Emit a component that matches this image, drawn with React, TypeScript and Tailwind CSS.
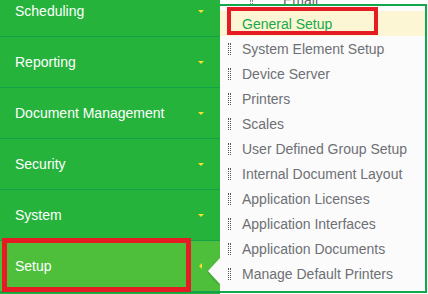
const menu = [
  { label: 'Scheduling' },
  { label: 'Reporting' },
  { label: 'Document Management' },
  { label: 'Security' },
  { label: 'System' },
];

const setupItems = [
  'General Setup',
  'System Element Setup',
  'Device Server',
  'Printers',
  'Scales',
  'User Defined Group Setup',
  'Internal Document Layout',
  'Application Licenses',
  'Application Interfaces',
  'Application Documents',
  'Manage Default Printers',
];

function Handle() {
  return <span className="block w-[3px] h-[12px] border-x border-dotted border-[#555] shrink-0" />;
}

export default function App() {
  return (
    <div
      className="relative w-[428px] h-[294px] overflow-hidden bg-white flex"
      style={{ fontFamily: '"Liberation Sans", Arial, sans-serif' }}
    >
      {/* sidebar */}
      <div className="w-[220px] shrink-0 bg-[#25b33b] flex flex-col -mt-[14px]">
        {menu.map((m) => (
          <div
            key={m.label}
            className="h-[51px] shrink-0 flex items-center justify-between pl-[15px] pr-[16px] border-b border-[#12a24a] text-white text-[14px]"
          >
            <span>{m.label}</span>
            <span className="w-0 h-0 border-x-[3px] border-x-transparent border-t-[3px] border-t-[#f3e12c]" />
          </div>
        ))}
        <div className="relative h-[52px] shrink-0 flex items-center justify-between pl-[15px] pr-[18px] bg-[#4dbf3b] border-b-2 border-[#12a24a] text-white text-[14px]">
          <span>Setup</span>
          <span className="w-0 h-0 border-y-[3px] border-y-transparent border-r-[3px] border-r-[#f3e12c]" />
          <div className="absolute left-[2px] -top-[3px] w-[189px] h-[54px] border-[5px] border-[#e61c24]" />
        </div>
      </div>

      {/* flyout */}
      <div className="relative flex-1 flex flex-col">
        <div className="relative h-[4px] overflow-hidden">
          <span className="absolute left-[63px] -top-[10px] text-[14px] text-[#666]">Email</span>
          <span className="absolute left-[30px] top-0 block w-[3px] h-[4px] border-x border-dotted border-[#888]" />
        </div>
        <div className="relative w-[207px] h-[289px] bg-[#fbfbfb] border-t-2 border-r-2 border-b-2 border-[#14a64b] pt-[5px]">
          {setupItems.map((item, i) => (
            <div
              key={item}
              className={`h-[25px] flex items-center gap-[11px] pl-[8px] text-[14px] ${
                i === 0 ? 'bg-[#fcf6d4] text-[#17a94b] h-[24px]' : 'text-[#6e7075]'
              }`}
            >
              <Handle />
              <span className="leading-none">{item}</span>
            </div>
          ))}
          <div className="absolute left-[7px] top-[1px] w-[151px] h-[28px] border-4 border-[#e61c24]" />
        </div>
      </div>

      {/* pointer arrow */}
      <svg className="absolute left-[205px] top-[256px]" width="17" height="30" viewBox="0 0 17 30">
        <defs>
          <filter id="sh" x="-50%" y="-50%" width="200%" height="200%">
            <feDropShadow dx="0" dy="1" stdDeviation="1" floodColor="#000" floodOpacity="0.3" />
          </filter>
        </defs>
        <path d="M15 2 L3 15 L15 28 Z" fill="#fbfbfb" filter="url(#sh)" />
        <rect x="15" y="0" width="2" height="30" fill="#fbfbfb" />
      </svg>
    </div>
  );
}
